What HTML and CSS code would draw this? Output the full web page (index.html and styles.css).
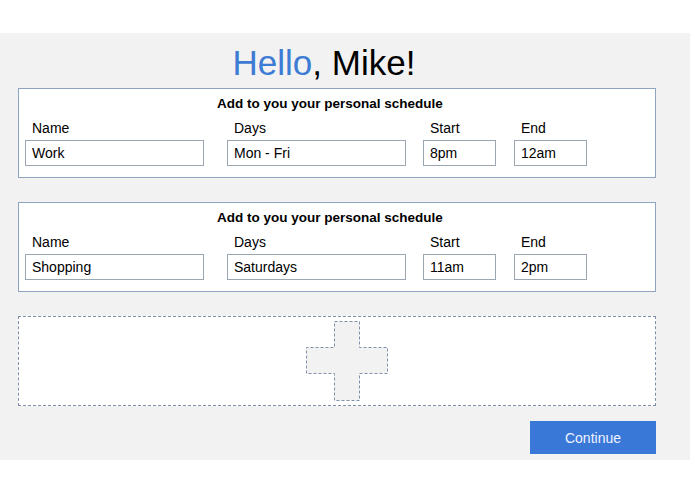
FILE: index.html
```html
<!DOCTYPE html>
<html>
<head>
<meta charset="utf-8">
<link rel="stylesheet" href="styles.css">
</head>
<body>
<div class="top"></div>
<main class="panel">
  <h1 class="title"><span class="hello">Hello</span>, Mike!</h1>

  <section class="card">
    <h2 class="card-title">Add to you your personal schedule</h2>
    <div class="fields">
      <div class="field"><div class="label">Name</div><div class="input wide">Work</div></div>
      <div class="field"><div class="label">Days</div><div class="input wide">Mon - Fri</div></div>
      <div class="field"><div class="label">Start</div><div class="input narrow">8pm</div></div>
      <div class="field"><div class="label">End</div><div class="input narrow">12am</div></div>
    </div>
  </section>

  <section class="card">
    <h2 class="card-title">Add to you your personal schedule</h2>
    <div class="fields">
      <div class="field"><div class="label">Name</div><div class="input wide">Shopping</div></div>
      <div class="field"><div class="label">Days</div><div class="input wide">Saturdays</div></div>
      <div class="field"><div class="label">Start</div><div class="input narrow">11am</div></div>
      <div class="field"><div class="label">End</div><div class="input narrow">2pm</div></div>
    </div>
  </section>

  <div class="add-box">
    <svg class="plus" width="82" height="80" viewBox="0 0 82 80">
      <polygon points="28.5,0.5 53.5,0.5 53.5,26.5 81.5,26.5 81.5,52.5 53.5,52.5 53.5,79.5 28.5,79.5 28.5,52.5 0.5,52.5 0.5,26.5 28.5,26.5" fill="#f2f2f2" stroke="#7f90a8" stroke-width="1" stroke-dasharray="3 2"/>
    </svg>
  </div>

  <div class="actions">
    <button class="continue">Continue</button>
  </div>
</main>
</body>
</html>
```

FILE: styles.css
```css
* { box-sizing: border-box; }
html, body { margin: 0; padding: 0; background: #ffffff; }
body { font-family: "Liberation Sans", Arial, sans-serif; color: #000; }

.top { height: 33px; }

.panel {
  width: 690px;
  height: 427px;
  background: #f2f2f2;
  padding: 0 34px 0 18px;
  overflow: hidden;
}

.title {
  margin: 8px 0 3px;
  font-size: 35px;
  line-height: 44px;
  font-weight: normal;
  text-align: center;
  padding-right: 26px;
}
.hello { color: #3d7bd4; }

.card {
  background: #fff;
  border: 1px solid #8ea4c0;
  height: 90px;
  padding: 7px 6px 0;
  margin-bottom: 24px;
}

.card-title {
  margin: 0;
  font-size: 13.5px;
  line-height: 16px;
  font-weight: bold;
  text-align: center;
  padding-right: 14px;
}

.fields {
  display: grid;
  grid-template-columns: 202px 196px 91px 73px;
  margin-top: 8px;
}

.label {
  font-size: 14px;
  line-height: 17px;
  padding-left: 7px;
  margin-bottom: 3px;
}

.input {
  height: 26px;
  border: 1px solid #9ba6b3;
  background: #fff;
  font-size: 14px;
  line-height: 24px;
  padding-left: 6px;
}
.input.wide { width: 179px; }
.input.narrow { width: 73px; }

.add-box {
  height: 90px;
  background: #fff;
  border: 1px dashed #7f90a8;
  display: flex;
  align-items: center;
  justify-content: center;
  padding-left: 20px;
}
.plus { display: block; }

.actions {
  display: flex;
  justify-content: flex-end;
  margin-top: 15px;
}

.continue {
  width: 126px;
  height: 33px;
  border: none;
  background: #3a78d8;
  color: #eef3ff;
  font-family: "Liberation Sans", Arial, sans-serif;
  font-size: 14px;
  padding: 0;
}
```
